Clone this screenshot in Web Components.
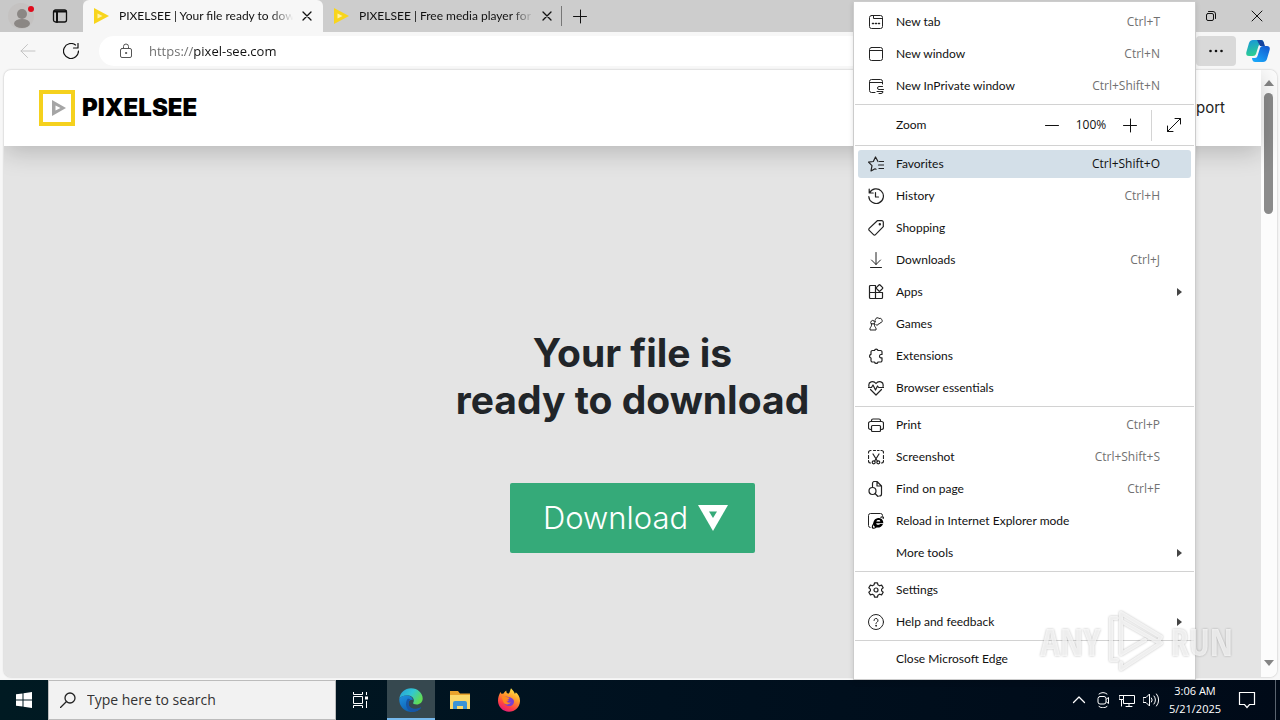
<!DOCTYPE html>
<html lang="en">
<head>
<meta charset="utf-8">
<title>PIXELSEE | Your file ready to download</title>
<style>
html, body { margin: 0; height: 100%; }
body { --label-font: Lato, "Open Sans", sans-serif; font-family: "Open Sans", "Noto Sans", sans-serif; font-size: 12px; color: #111; overflow: hidden; }
</style>
</head>
<body>
<desktop-screen></desktop-screen>

<script>
const line = (inner, extra = '') => `<svg viewBox="0 0 16 16" width="16" height="16" fill="none" stroke="currentColor" stroke-linecap="round" stroke-linejoin="round" aria-hidden="true" ${extra}>${inner}</svg>`;

const ICONS = {
  newtab: line('<rect x="1.5" y="1.5" width="13" height="13" rx="2"/><path d="M5.500 1.500v3h9"/><path d="M4.500 9.500h1M7.500 9.500h1M10.500 9.500h1" stroke-width="1.500"/>'),
  window: line('<rect x="1.5" y="1.500" width="13" height="13" rx="2"/><path d="M1.500 4.500h13"/>'),
  inprivate: line('<path d="M7 14.500H3.500a2 2 0 0 1-2-2v-9a2 2 0 0 1 2-2h9a2 2 0 0 1 2 2V6M1.500 4.500h13"/><path d="M14.500 8.500h-3.500a1.500 1.500 0 0 0 0 3h1.500M9 13.500h2.500M15.500 11.500h-2.500M11 15.500h2a2 2 0 0 0 2-2h-2.500"/>'),
  favorites: line('<path d="M10 5.500L7.500 1 5.300 5.500.5 6.200 4 9.700 3 15l4-2.200 1 .5M11.500 5.500h4M10.500 9h5M11 12.500h4.500"/>', 'stroke-width="1.200"'),
  history: line('<path d="M1.200 1v4h4M1.500 5A7.300 7.300 0 1 1 .8 8.500M7.500 4.500v4.500h3"/>', 'stroke-width="1.200"'),
  shopping: line('<path d="M9.300.7h4.500a1.500 1.500 0 0 1 1.500 1.500v4.500L7.500 14.700a1.400 1.400 0 0 1-2 0L1.200 10.400a1.400 1.400 0 0 1 0-2z"/><circle cx="11.800" cy="4.200" r=".6" fill="currentColor"/>', 'stroke-width="1.200"'),
  downloads: line('<path d="M8 .5v12M3.500 8L8 12.500 12.500 8M2.500 15.500h11"/>'),
  apps: line('<path d="M7.500 1.500h-5a1 1 0 0 0-1 1v11a1 1 0 0 0 1 1h11a1 1 0 0 0 1-1v-5h-13M7.500 1.500v13"/><rect x="9" y="1.500" width="5" height="5" rx=".8" transform="rotate(45 11.500 4)"/>', 'stroke-width="1.200"'),
  games: line('<path d="M3.200 7.800a2 2 0 1 1 3 0M3.200 7.800h3M3.700 8c0 2-.7 3-1.700 4v2h6v-2c-1-1-1.700-2-1.700-4M7.800 8.300L9 9.500l1-1.300a2 2 0 0 0 2-1.300 2 2 0 0 0 1.800-3.200 2 2 0 0 0-2.800-1.200 2 2 0 0 0-3.500.8 2 2 0 0 0-.2 2.500"/>'),
  extensions: line('<path d="M4.500 2.500h2a1.800 1.800 0 0 1 3.500 0h2.500a1.500 1.500 0 0 1 1.500 1.500v2.500h-1.200a1.700 1.700 0 0 0 0 3.300H14V12.500a1.500 1.500 0 0 1-1.500 1.500H10a1.800 1.800 0 0 1-3.500 0h-2A1.500 1.500 0 0 1 3 12.500V10a1.900 1.900 0 0 1 0-3.700V4a1.500 1.500 0 0 1 1.500-1.500z"/>', 'stroke-width="1.200"'),
  essentials: line('<path d="M1 6.500C-.2 1.500 5.500.2 8 3.500c2.500-3.300 8.200-2 7 3M.5 7.500h3l1.500-2.500 2.500 5 2-4 1.200 1.500h4.800M2.500 9.500L8 15l5.500-5.500"/>', 'stroke-width="1.200"'),
  print: line('<path d="M3.500 12.500h-1a2 2 0 0 1-2-2V6.500a2 2 0 0 1 2-2h11a2 2 0 0 1 2 2v4a2 2 0 0 1-2 2h-1M3.500 4.500v-1a1.500 1.500 0 0 1 1.500-1.500h6a1.500 1.500 0 0 1 1.500 1.500v1"/><rect x="3.500" y="8.500" width="9" height="6" rx="1"/>', 'stroke-width="1.200"'),
  screenshot: line('<path d="M.5 4V3.500a2 2 0 0 1 2-2H3M5.500 1.500h2M9.500 1.500h1.500M13 1.500h.5a2 2 0 0 1 2 2V4M.5 6.500v3M15.500 6.500v3M.5 11.500v.5a2 2 0 0 0 2 2M15.500 11.500v.5a2 2 0 0 1-2 2M5 5l4.500 7.200M11 5l-4.500 7.200"/><circle cx="5.700" cy="13.300" r="1.500"/><circle cx="10.300" cy="13.300" r="1.500"/>', 'stroke-width="1.200"'),
  find: line('<path d="M4.500 5.500v-3a2 2 0 0 1 2-2H9l4.500 4.500v8a2 2 0 0 1-2 2H11M9 .5V5h4.500"/><circle cx="4.500" cy="10" r="3.500"/><path d="M7 12.500l3 3"/>', 'stroke-width="1.200"'),
  ie: `<svg viewBox="0 0 16 16" width="16" height="16" aria-hidden="true"><path d="M14.500 3V2.500a2 2 0 0 0-2-2h-10a2 2 0 0 0-2 2v10a2 2 0 0 0 2 2" fill="none" stroke="currentColor"/><path d="M15.300 10.300H8.200c.1 1.700 3 2.100 3.700.6h3.100c-1.400 4.500-8.200 4.800-9.400 1.300-1.200-3.600 1.600-7.500 5.200-7.200 3.200.2 4.600 2.500 4.500 5.300zM12.300 8.500c0-1.900-3.400-2-3.900 0z" fill="#000" fill-rule="evenodd"/><path d="M12.500 4.500c2.500-1.500 3.300-.5 2.500 1.200M6.200 10c-3.500 4.500-1.700 6.500 2 4.300" fill="none" stroke="#000" stroke-width="1.200"/></svg>`,
  settings: line('<circle cx="8" cy="8" r="2"/><path d="M6.500.8h3l.4 2 1.700 1 2-.7 1.600 2.700L13.600 7.100v1.800l1.600 1.300-1.600 2.700-2-.7-1.700 1-.4 2h-3l-.4-2-1.700-1-2 .7L.8 10.200l1.600-1.300V7.100L.8 5.800l1.600-2.700 2 .7 1.700-1z"/>', 'stroke-width="1.200"'),
  help: line('<circle cx="8" cy="8" r="7.500"/><path d="M6 6.500a2 2 0 1 1 3 1.700c-.7.500-1 .8-1 1.600"/><circle cx="8" cy="11.800" r=".4" fill="currentColor"/>'),
  minus: line('<path d="M1.500 8.500h13"/>'),
  plus: line('<path d="M1.500 8.500h13M8.500 2v13"/>'),
  expand: line('<path d="M1.500 14.500l13-13M9 1.500h5.500V7M1.500 9v5.500H7"/>'),
  back: line('<path d="M15 8H1M7.500 1.500L1 8l6.500 6.500"/>'),
  reload: line('<path d="M15.500 8a7.500 7.500 0 1 1-3-6M15 .5v4.500h-4.500"/>', 'stroke-width="1.200"'),
  lock: line('<rect x="2.500" y="5.500" width="11" height="9" rx="1.500"/><path d="M5.500 5.500v-2a2.500 2.500 0 0 1 5 0v2"/><circle cx="8" cy="10" r=".6" fill="currentColor"/>'),
  close: line('<path d="M4 4l8 8M12 4l-8 8"/>', 'stroke-width="1.300"'),
  winclose: line('<path d="M3 3l10 10M13 3L3 13"/>'),
  restore: line('<rect x="3.500" y="5.500" width="7" height="7" rx="1.500"/><path d="M5.500 3.500H10a2.500 2.500 0 0 1 2.500 2.500v4.500"/>'),
  more: `<svg viewBox="0 0 16 16" width="16" height="16" fill="currentColor" aria-hidden="true"><circle cx="2.500" cy="8" r="1.300"/><circle cx="8" cy="8" r="1.300"/><circle cx="13.500" cy="8" r="1.300"/></svg>`,
  tabs: line('<rect x="1.500" y="2" width="13" height="12" rx="2"/><path d="M2 3.500h12M5 4v10" stroke-width="2"/>', 'stroke-width="1.300"'),
  avatar: `<svg viewBox="0 0 28 28" width="28" height="28" aria-hidden="true"><circle cx="14" cy="14" r="13" fill="#c4c2c1"/><circle cx="15" cy="12" r="5" fill="#8b8784"/><ellipse cx="15" cy="21.500" rx="8" ry="4.500" fill="#8b8784"/><circle cx="24" cy="7" r="3" fill="#e00b1c"/></svg>`,
  favicon: `<svg viewBox="0 0 16 16" width="16" height="16" aria-hidden="true"><path d="M1 0l15 8L1 16z" fill="#f8d51c"/><path d="M4.500 5.500l5 2.500-5 2.500z" fill="#fff3a8"/></svg>`,
  copilot: `<svg viewBox="0 0 24 24" width="24" height="24" aria-hidden="true"><defs><linearGradient id="a" x1="0" y1="0" x2="0.300" y2="1"><stop offset="0" stop-color="#1793dc"/><stop offset="1" stop-color="#2ccf91"/></linearGradient><linearGradient id="b" x1="1" y1="0" x2="0.300" y2="1"><stop offset="0" stop-color="#1356ce"/><stop offset="1" stop-color="#19a5f8"/></linearGradient></defs><path d="M7 1h8q2 0 2.600 2L18 5h-3q-2 0-2.500 2L10 15q-.6 2-3 2H3q-3.500 0-2.600-4L3 4q1-3 4-3z" fill="url(#a)"/><path d="M17 23H9q-2 0-2.600-2L6 19h3q2 0 2.500-2L14 9q.6-2 3-2h4q3.500 0 2.600 4L21 20q-1 3-4 3z" fill="url(#b)"/><path d="M11 1h4q2 0 2.600 2L19 7h-5z" fill="#15449e"/></svg>`,
  windows: `<svg viewBox="0 0 16 16" width="16" height="16" fill="#fff" aria-hidden="true"><path d="M0 2.300l6.500-.9v6.100H0zM7.500 1.200L16 0v7.500H7.500zM0 8.500h6.500v6.100L0 13.700zM7.500 8.500H16V16l-8.500-1.200z"/></svg>`,
  search: line('<circle cx="10" cy="6" r="5"/><path d="M6.500 9.500L.5 15.500"/>', 'stroke-width="1.300"'),
  taskview: `<svg viewBox="0 0 16 16" width="16" height="16" fill="none" stroke="#fff" aria-hidden="true"><path d="M.5 0v2.500h9V0M.5 16v-2.500h9V16M.5 4.500h9v7h-9zM13.500 0v3M13.500 9v7"/><path d="M12 4.500h3v3h-3z" fill="#fff" stroke="none"/></svg>`,
  edge: `<svg viewBox="0 0 24 24" width="24" height="24" aria-hidden="true"><defs><linearGradient id="g1" x1="0" y1="0" x2="1" y2=".5"><stop offset="0" stop-color="#249dd8"/><stop offset=".55" stop-color="#32c7d2"/><stop offset="1" stop-color="#60db55"/></linearGradient><linearGradient id="g2" x1="0" y1="0" x2=".6" y2="1"><stop offset="0" stop-color="#1e91df"/><stop offset="1" stop-color="#0d5cae"/></linearGradient></defs><path d="M.3 11C1 4.500 6 .3 12 .3c6.800 0 11.700 5 11.700 10.200 0 3.800-2.900 6-6 6-2.500 0-4-.7-3.500-1.700C16 12 14 8 9.500 7.500 5 7 1.200 8.500.3 11z" fill="url(#g1)"/><path d="M.3 11C1.200 8.500 5 7 8.500 7.500c3 .4 5.300 2.400 5.500 4.500-2-1-4.700.5-4.500 4 .2 3.700 4.200 6 8.500 4.800 1.500-.4 3-1.300 3.600-1.400.4 0 .4.400.2.700C19 24 14 24.500 10.500 23.700 4 22.500 0 17 .3 11z" fill="url(#g2)"/><path d="M8.500 11c-3 4.500-1.500 11 4.500 12.800 4 .2 7-1.700 8.800-3.700.2-.3.200-.7-.2-.7-4.600 2.700-11.700 1.200-12.100-3.400-.1-2 .7-3.500 2.200-4.200-1-.9-2.300-1.200-3.200-.8z" fill="#1755a6"/></svg>`,
  explorer: `<svg viewBox="0 0 24 24" width="24" height="24" aria-hidden="true"><path d="M2 3h8l2 2.500h10V20H2z" fill="#e9a32c"/><path d="M2 7h20v14H2z" fill="#fbd869"/><path d="M5 21v-6q0-2 2-2h10q2 0 2 2v6h-4v-3H9v3z" fill="#3c94d5"/></svg>`,
  firefox: `<svg viewBox="0 0 24 24" width="24" height="24" aria-hidden="true"><defs><linearGradient id="f" x1=".8" y1="0" x2=".3" y2="1"><stop offset="0" stop-color="#fff14a"/><stop offset=".4" stop-color="#ff9a2b"/><stop offset=".75" stop-color="#ff4044"/><stop offset="1" stop-color="#e31a7c"/></linearGradient></defs><path d="M3.500 4c.3 1 .8 1.600 1.500 2 .4-.3 1-.4 1.700-.4C7.300 4 8.300 3 9.500 2.700 9 4 9.600 5.200 11 5.500c2 .2 1.700-2.500 3-5.200 2 2 3.200 3.500 3.800 5.400.7-.3.900-.8.900-1.400 2.500 2 4.500 5 4.300 9C22.700 19.500 18 23.700 12 23.700S1.200 19 1 13c-.1-3.500 1-6.500 2.500-9z" fill="url(#f)"/><path d="M7.500 9c1.800-1 3 .3 4.500.2 2 .1 5 1.500 5 4.300 0 3-2.500 4.700-5 4.700-3 0-5.200-2.200-5-5 2 1.300 3.500.5 5-.7-1.500-.3-3.500-1.500-4.500-3.500z" fill="#7a3fd0"/><path d="M4.500 8.500c2-1 3.500-.8 4.800.3l3 1.300c-.2 1.800-2.200 1.500-3 2.700.2 1.500 2.500 2.500 4.500 1.500-2 3.500-6.800 2.500-7.600-.8z" fill="#ff8a1e"/></svg>`,
  chevron: line('<path d="M2.500 10.500L8 5l5.500 5.500"/>', 'stroke-width="1.300"'),
  camera: line('<path d="M4 2q4-3 8 0M4 14.500q4 3 8 0M11.500 7l2-1.500v6l-2-1.500"/><rect x="3" y="4.500" width="8" height="7.500" rx="2"/>'),
  network: line('<path d="M4.500 3.500h11v8h-11V8M.5 3.500h4v4h-4zM2.500 7.500v6.500M10 11.500v3M7 14.500h6"/>'),
  sound: line('<path d="M.5 5.500h2.500l3.500-3.500v12l-3.500-3.500H.5zM8.500 6q1.500 2 0 4M11 4q3 4 0 8M13.500 2q4.500 6 0 12"/>'),
  notify: `<svg viewBox="0 0 18 18" width="18" height="18" fill="none" stroke="#fff" stroke-width="1.200" aria-hidden="true"><path d="M1.500 1.500h15v12h-5l-2.500 3-2.500-3h-5z"/></svg>`
};

const BUTTON = 'button { all: unset; box-sizing: border-box; display: flex; align-items: center; justify-content: center; } svg { display: block; flex: none; }';

function define(name, render) {
  customElements.define(name, class extends HTMLElement {
    constructor() { super(); this.attachShadow({ mode: 'open' }); }
    connectedCallback() { this.shadowRoot.innerHTML = render(this); }
  });
}

define('icon-button', el => `
<style>:host { display: flex; flex: none; } ${BUTTON}
button { width: 100%; height: 100%; border-radius: inherit; }</style>
<button type="button" aria-label="${el.getAttribute('label')}">${ICONS[el.getAttribute('icon')]}</button>`);

define('browser-tab', el => `
<style>
:host { display: flex; align-items: center; flex: none; width: 240px; box-sizing: border-box; padding: 0 4px 0 10px; gap: 10px; }
:host([active]) { background: #f7f7f7; border-radius: 6px 6px 0 0; }
svg { display: block; flex: none; }
.title { flex: 1; min-width: 0; overflow: hidden; white-space: nowrap; font-family: var(--label-font); line-height: 16px; mask-image: linear-gradient(90deg, #000 86%, transparent 99%); }
icon-button { width: 24px; height: 24px; margin-left: -10px; }
</style>
${ICONS.favicon}<span class="title"><slot></slot></span><icon-button icon="close" label="Close tab"></icon-button>`);

define('tab-strip', () => `
<style>
:host { display: flex; height: 32px; background: #cdcdcd; flex: none; }
.lead { display: flex; align-items: center; width: 83px; box-sizing: border-box; padding-left: 7px; gap: 9px; background: #c8c8c8; }
.avatar { width: 28px; height: 30px; } .tool { width: 32px; height: 32px; }
.rule { width: 1px; height: 20px; margin: 6px 0 6px -2px; background: #777; }
.add { width: 36px; height: 32px; }
.grow { flex: 1; }
.win { width: 46px; height: 32px; }
</style>
<div class="lead"><icon-button class="avatar" icon="avatar" label="Profile"></icon-button><icon-button class="tool" icon="tabs" label="Tab actions"></icon-button></div>
<browser-tab active>PIXELSEE | Your file ready to download</browser-tab>
<browser-tab>PIXELSEE | Free media player for your PC</browser-tab>
<span class="rule"></span>
<icon-button class="add" icon="plus" label="New tab"></icon-button>
<span class="grow"></span>
<icon-button class="win" icon="restore" label="Restore"></icon-button>
<icon-button class="win" icon="winclose" label="Close window"></icon-button>`);

define('address-bar', () => `
<style>
:host { display: flex; align-items: center; flex: none; height: 38px; box-sizing: border-box; padding: 0 10px 0 8px; background: #f7f7f7; }
.nav { width: 40px; height: 30px; margin-right: 3px; }
.back { color: #c4c4c4; }
.field { flex: 1; display: flex; align-items: center; gap: 15px; height: 30px; box-sizing: border-box; padding: 0 19px; margin: 0 100px 0 5px; background: #fff; border-radius: 15px; color: #555; }
svg { display: block; flex: none; }
input { flex: 1; min-width: 0; border: 0; padding: 0; outline: 0; height: 20px; font: 13px/20px "Open Sans", "Noto Sans", sans-serif; -webkit-text-fill-color: transparent; background: linear-gradient(90deg, #6b6b6b 44px, #111 44px); -webkit-background-clip: text; background-clip: text; }
.more { width: 40px; height: 30px; background: #d9d9d9; border-radius: 4px; margin-right: 10px; }
.copilot { width: 24px; height: 30px; }
</style>
<icon-button class="nav back" icon="back" label="Back"></icon-button>
<icon-button class="nav" icon="reload" label="Refresh"></icon-button>
<label class="field">${ICONS.lock}<input type="text" aria-label="Address" value="https://pixel-see.com"></label>
<icon-button class="more" icon="more" label="Settings and more"></icon-button>
<icon-button class="copilot" icon="copilot" label="Copilot"></icon-button>`);

define('site-header', () => `
<style>
:host { display: flex; align-items: center; justify-content: space-between; height: 76px; flex: none; padding: 0 36px 0 35px; background: #fff; box-shadow: 0 6px 24px rgba(0,0,0,.2); position: relative; font-family: Inter, "Open Sans", sans-serif; }
a { color: #222; text-decoration: none; }
.logo { display: flex; align-items: center; gap: 7px; font-size: 24px; line-height: 30px; font-weight: 900; color: #000; }
svg { display: block; }
.link { font-size: 15px; line-height: 20px; }
</style>
<a class="logo" href="#"><svg viewBox="0 0 36 36" width="36" height="36" aria-hidden="true"><path d="M2 2h32v32H2z" fill="#fff" stroke="#f5d11d" stroke-width="4"/><path d="M13 10l14 8-14 8z" fill="#a5a5a5"/><path d="M16.500 15.500l5 2.500-5 2.500z" fill="#fff"/></svg>PIXELSEE</a>
<a class="link" href="#">Support</a>`);

define('site-page', () => `
<style>
:host { display: flex; flex-direction: column; flex: 1; min-width: 0; background: #e4e4e4; font-family: Inter, "Open Sans", sans-serif; }
main { display: flex; flex-direction: column; align-items: center; padding-top: 183px; }
h1 { margin: 0; font-size: 39px; line-height: 47px; font-weight: 700; text-align: center; color: #212529; }
a { display: flex; align-items: center; justify-content: center; gap: 10px; width: 245px; height: 70px; box-sizing: border-box; padding-left: 6px; margin-top: 60px; background: #35aa79; color: #fff; border-radius: 2px; text-decoration: none; font-size: 31px; line-height: 40px; font-weight: 300; }
</style>
<site-header></site-header>
<main><h1>Your file is<br>ready to download</h1>
<a href="#">Download<svg viewBox="0 0 30 26" width="30" height="26" aria-hidden="true"><path d="M0 0h30L15 26z" fill="#fff"/><path d="M11 6.500h8L15 13z" fill="#35aa79"/></svg></a></main>`);

define('page-scrollbar', () => `
<style>
:host { display: flex; flex-direction: column; align-items: center; width: 16px; flex: none; background: #fcfcfc; box-sizing: border-box; padding: 10px 0 11px; }
svg { display: block; margin-right: 1px; }
.thumb { width: 9px; height: 121px; margin: 7px 1px auto 0; border-radius: 5px; background: #8b8b8b; }
</style>
<svg width="10" height="6" aria-hidden="true"><path d="M5 0l5 6H0z" fill="#858585"/></svg>
<span class="thumb"></span>
<svg width="10" height="6" aria-hidden="true"><path d="M0 0h10L5 6z" fill="#858585"/></svg>`);

define('menu-item', el => {
  const icon = el.getAttribute('icon'), keys = el.getAttribute('keys');
  return `
<style>${BUTTON}
:host { display: block; padding: 2px 4px; }
button { width: 100%; height: 28px; justify-content: flex-start; gap: 12px; padding: 0 8px 0 10px; border-radius: 3px; line-height: 16px; }
:host([selected]) button { background: #d3dfe8; }
.icon { width: 16px; flex: none; color: #222; }
.label { flex: 1; white-space: nowrap; font-family: var(--label-font); }
kbd { font: inherit; color: #717171; }
:host([selected]) kbd { color: #111; }
.arrow { width: 11px; display: flex; justify-content: flex-end; flex: none; }
</style>
<button type="button" role="menuitem"><span class="icon">${icon ? ICONS[icon] : ''}</span><span class="label"><slot></slot></span>${keys ? `<kbd>${keys}</kbd>` : ''}<span class="arrow">${el.hasAttribute('submenu') ? '<svg width="8" height="8" aria-hidden="true"><path d="M2 0l5 4-5 4z" fill="#444"/></svg>' : ''}</span></button>`;
});

define('zoom-row', () => `
<style>
:host { display: flex; align-items: center; height: 36px; padding-left: 42px; line-height: 16px; }
.label { flex: 1; font-family: var(--label-font); }
.step { width: 32px; height: 28px; }
.value { width: 46px; text-align: center; }
.rule { width: 1px; height: 31px; background: #d4d4d4; margin-left: 5px; }
.full { width: 43px; height: 28px; }
</style>
<span class="label">Zoom</span>
<icon-button class="step" icon="minus" label="Zoom out"></icon-button><span class="value">100%</span>
<icon-button class="step" icon="plus" label="Zoom in"></icon-button><span class="rule"></span>
<icon-button class="full" icon="expand" label="Full screen"></icon-button>`);

define('edge-menu', () => `
<style>
:host { display: block; box-sizing: border-box; width: 343px; background: #fff; border: 1px solid #ccc; padding: 4px 0; box-shadow: 0 2px 5px rgba(0,0,0,.12); }
hr { border: 0; height: 1px; margin: 2px 1px; background: #d2d2d2; }
</style>
<menu-item icon="newtab" keys="Ctrl+T">New tab</menu-item>
<menu-item icon="window" keys="Ctrl+N">New window</menu-item>
<menu-item icon="inprivate" keys="Ctrl+Shift+N">New InPrivate window</menu-item>
<hr><zoom-row></zoom-row><hr>
<menu-item icon="favorites" keys="Ctrl+Shift+O" selected>Favorites</menu-item>
<menu-item icon="history" keys="Ctrl+H">History</menu-item>
<menu-item icon="shopping">Shopping</menu-item>
<menu-item icon="downloads" keys="Ctrl+J">Downloads</menu-item>
<menu-item icon="apps" submenu>Apps</menu-item>
<menu-item icon="games">Games</menu-item>
<menu-item icon="extensions">Extensions</menu-item>
<menu-item icon="essentials">Browser essentials</menu-item>
<hr>
<menu-item icon="print" keys="Ctrl+P">Print</menu-item>
<menu-item icon="screenshot" keys="Ctrl+Shift+S">Screenshot</menu-item>
<menu-item icon="find" keys="Ctrl+F">Find on page</menu-item>
<menu-item icon="ie">Reload in Internet Explorer mode</menu-item>
<menu-item submenu>More tools</menu-item>
<hr>
<menu-item icon="settings">Settings</menu-item>
<menu-item icon="help" submenu>Help and feedback</menu-item>
<hr>
<menu-item>Close Microsoft Edge</menu-item>`);

define('task-bar', () => `
<style>
:host { display: flex; align-items: stretch; height: 40px; flex: none; background: linear-gradient(90deg, #001a22, #001220 45%, #000a18); color: #fff; }
.start { width: 48px; }
.search { display: flex; align-items: center; gap: 11px; width: 288px; box-sizing: border-box; padding: 0 11px; background: #f2f2f2; border: 1px solid #bcbcbc; color: #222; }
svg { display: block; flex: none; }
input { flex: 1; min-width: 0; border: 0; padding: 0; outline: 0; background: none; height: 20px; font: 14px/20px "Open Sans", "Noto Sans", sans-serif; }
input::placeholder { color: #333; opacity: 1; }
.app { width: 48px; margin-left: 1px; }
.view { margin: 0 1px; }
.on { background: #36484f; box-shadow: inset 0 -2px #76b9ed; }
.grow { flex: 1; }
.tray { width: 24px; }
time { width: 64px; display: flex; flex-direction: column; justify-content: center; text-align: center; line-height: 18px; font-size: 11px; }
.notify { width: 40px; }
.show { width: 4px; margin-left: 8px; border-left: 1px solid #5a6470; }
</style>
<icon-button class="start" icon="windows" label="Start"></icon-button>
<label class="search">${ICONS.search}<input type="text" aria-label="Search" placeholder="Type here to search"></label>
<icon-button class="app view" icon="taskview" label="Task view"></icon-button>
<icon-button class="app on" icon="edge" label="Microsoft Edge"></icon-button>
<icon-button class="app" icon="explorer" label="File Explorer"></icon-button>
<icon-button class="app" icon="firefox" label="Firefox"></icon-button>
<span class="grow"></span>
<icon-button class="tray" icon="chevron" label="Show hidden icons"></icon-button>
<icon-button class="tray" icon="camera" label="Meet now"></icon-button>
<icon-button class="tray" icon="network" label="Network"></icon-button>
<icon-button class="tray" icon="sound" label="Volume"></icon-button>
<time><span>3:06 AM</span><span>5/21/2025</span></time>
<icon-button class="notify" icon="notify" label="Notifications"></icon-button>
<span class="show"></span>`);

define('any-run-mark', () => `
<style>
:host { display: flex; align-items: center; gap: 6px; height: 64px; font: 300 37px/40px "Open Sans Condensed", "Roboto Condensed", "Liberation Sans Narrow", "Liberation Sans", sans-serif; color: rgba(255,255,255,.72); filter: drop-shadow(0 0 1px rgba(0,0,0,.35)); pointer-events: none; }
svg { display: block; }
</style>
<span>ANY</span><svg viewBox="0 0 58 64" width="58" height="64" fill="none" stroke="currentColor" stroke-width="4" stroke-linejoin="round" stroke-linecap="round" aria-hidden="true"><path d="M10 8H4v42h6M14 20V3l40 24-3 5-37-21M14 20v24l24-14M14 53v6l40-26"/></svg><span>RUN</span>`);

define('desktop-screen', () => `
<style>
:host { display: flex; flex-direction: column; height: 100vh; position: relative; background: #f7f7f7; }
.view { flex: 1; min-height: 0; display: flex; margin: 0 3px 3px 4px; border-radius: 7px; overflow: hidden; box-shadow: 0 0 2px rgba(0,0,0,.3); }
edge-menu { position: absolute; top: 1px; right: 84px; z-index: 2; }
any-run-mark { position: absolute; right: 47px; bottom: 46px; z-index: 3; }
</style>
<tab-strip></tab-strip>
<address-bar></address-bar>
<div class="view"><site-page></site-page><page-scrollbar></page-scrollbar></div>
<task-bar></task-bar>
<edge-menu role="menu"></edge-menu>
<any-run-mark></any-run-mark>`);
</script>
</body>
</html>
